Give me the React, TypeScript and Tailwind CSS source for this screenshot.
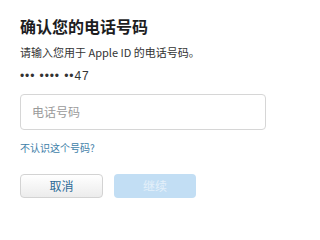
import React from 'react';

const font = { fontFamily: '"Noto Sans CJK SC", "Noto Sans", sans-serif' };

const App = () => {
  return (
    <div className="w-[285px] h-[214px] bg-white overflow-hidden" style={font}>
      <div className="pl-[20px] pr-[19px] pt-[16px]">
        {/* Title */}
        <h1 className="text-[16px] leading-[20px] font-semibold text-[#1d1d1f]">确认您的电话号码</h1>
        <p className="mt-[9px] text-[11px] leading-[14px] text-[#333]">请输入您用于 Apple ID 的电话号码。</p>
        <p className="mt-[10px] text-[12px] leading-[14px] text-[#333] font-['Liberation_Sans',sans-serif] tracking-[0.9px]">
          ••• •••• ••47
        </p>

        {/* Phone input */}
        <div className="mt-[11px] h-[36px] w-[246px] rounded-[4px] border border-[#d6d6d6] flex items-center px-[11px]">
          <span className="text-[12px] text-[#9a9a9a]">电话号码</span>
        </div>

        <a className="block mt-[12px] text-[10px] leading-[12px] text-[#3d7ea8]">不认识这个号码?</a>

        {/* Buttons */}
        <div className="mt-[20px] flex gap-[11px]">
          <button className="w-[83px] h-[24px] rounded-[4px] border border-[#d3d3d3] bg-gradient-to-b from-white to-[#ececec] text-[12px] text-[#2d6a96]">
            取消
          </button>
          <button className="w-[82px] h-[24px] rounded-[4px] bg-[#c2def4] text-[12px] text-[#e4f0fa]">
            继续
          </button>
        </div>
      </div>
    </div>
  );
};

export default App;
